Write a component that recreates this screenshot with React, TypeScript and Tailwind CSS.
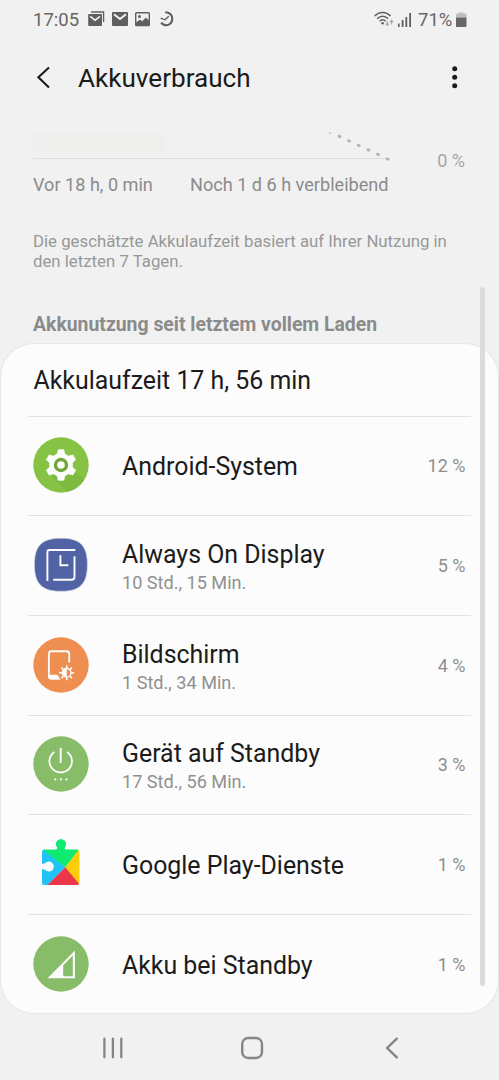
import type { ReactNode } from 'react'
import clsx from 'clsx'

interface UsageItem {
  name: string
  duration?: string
  percent: number
  icon: ReactNode
}

function MailStackIcon() {
  return (
    <svg className="w-[17px] h-[16px]" viewBox="0 0 17 16" fill="none">
      <path d="M3.2 1H15.6V11" stroke="#5f5f5f" strokeWidth="1.3" />
      <rect x="0.2" y="3" width="13.8" height="12" rx="1" fill="#5f5f5f" />
      <path d="M2.2 5.3L7.1 9.2L12 5.3" stroke="#f1f1f1" strokeWidth="1.7" />
    </svg>
  )
}

function MailIcon() {
  return (
    <svg className="w-[16px] h-[16px]" viewBox="0 0 16 16" fill="none">
      <rect y="1" width="16" height="14" rx="1" fill="#5f5f5f" />
      <path d="M2 3.2L8 8L14 3.2" stroke="#f1f1f1" strokeWidth="2" />
    </svg>
  )
}

function PictureIcon() {
  return (
    <svg className="w-[15px] h-[16px]" viewBox="0 0 15 16" fill="none">
      <rect x="0.7" y="1.7" width="13.6" height="12.8" rx="0.8" stroke="#5f5f5f" strokeWidth="1.4" />
      <circle cx="4.5" cy="5.4" r="1.5" fill="#5f5f5f" />
      <path d="M1 11.5L5 8.6L7.2 10.3L10.8 6.6L14 9.6V14.5H1Z" fill="#5f5f5f" />
    </svg>
  )
}

function ClockSwirlIcon() {
  return (
    <svg className="w-[14px] h-[16px]" viewBox="0 0 14 16" fill="none" stroke="#5f5f5f">
      <path d="M5.2 1.3C9.7 1.3 12.7 4.4 12.3 8.4C11.9 12.5 8.6 14.7 5.2 14.1C3.4 13.8 2 12.9 1.2 11.6" strokeWidth="2.1" />
      <path d="M0.6 7.2L5 8.8L8.8 5.2" strokeWidth="1.4" />
    </svg>
  )
}

function WifiIcon() {
  return (
    <svg className="w-[20px] h-[16px]" viewBox="0 0 20 16" fill="none">
      <g stroke="#5f5f5f" strokeWidth="1.5">
        <path d="M0.7 5.1C5 0.2 12.2 0.2 16.5 5.1" />
        <path d="M3.2 7.8C6.2 4.5 11 4.5 14 7.8" />
        <path d="M5.7 10.2C7.3 8.3 9.9 8.3 11.5 10.2" />
      </g>
      <circle cx="8.6" cy="12.3" r="1.3" fill="#5f5f5f" />
      <path d="M13.3 10V14.2M11.7 12.7L13.3 14.4L14.9 12.7M17.6 13.4V9.5M16 11L17.6 9.3L19.2 11" stroke="#a8a8a8" strokeWidth="1.1" />
    </svg>
  )
}

function SignalIcon() {
  return (
    <svg className="w-[14px] h-[16px]" viewBox="0 0 14 16" fill="#5f5f5f">
      <rect x="0" y="11.5" width="1.6" height="3.5" />
      <rect x="3.7" y="8" width="1.8" height="7" />
      <rect x="7.4" y="5" width="1.8" height="10" />
      <rect x="11.2" y="1" width="1.8" height="14" />
    </svg>
  )
}

function BatteryIcon() {
  return (
    <svg className="w-[11px] h-[16px]" viewBox="0 0 11 16">
      <path d="M3 0.5H7.5V1.5H9.6Q10.5 1.5 10.5 2.5V5.5H0V2.5Q0 1.5 1 1.5H3Z" fill="#bdbdbd" />
      <path d="M0 5.5H10.5V14.2Q10.5 15 9.7 15H0.8Q0 15 0 14.2Z" fill="#666666" />
    </svg>
  )
}

const gearTeeth = [0, 60, 120, 180, 240, 300]

function GearIcon() {
  return (
    <svg className="w-[56px] h-[56px]" viewBox="0 0 56 56">
      <circle cx="28" cy="28" r="27.7" fill="#86c345" />
      <path d="M17.5 38L34 55C41 53.5 47.5 49 51 43L39 31Z" fill="#7fba40" />
      <g fill="#fcfcfc">
        <circle cx="28" cy="28" r="11.8" />
        {gearTeeth.map(angle => (
          <path key={angle} d="M25.2 12.8H30.8L32 18.5H24Z" transform={`rotate(${angle} 28 28)`} strokeLinejoin="round" stroke="#fcfcfc" strokeWidth="0.8" />
        ))}
      </g>
      <circle cx="28" cy="28" r="5.5" fill="#fcfcfc" stroke="#6fa63a" strokeWidth="3.4" />
    </svg>
  )
}

function AlwaysOnIcon() {
  return (
    <svg className="w-[56px] h-[56px]" viewBox="0 0 56 56" fill="none">
      <path d="M28 1.2C47 1.2 54.4 8.6 54.4 27.7S47 54.3 28 54.3S1.4 46.8 1.4 27.7S9 1.2 28 1.2Z" fill="#5163a5" stroke="#d5d8e4" strokeWidth="0.7" />
      <g stroke="#fcfcfc" strokeWidth="1.9">
        <path d="M42.3 13H16.4Q14.4 13 14.4 15V44" />
        <path d="M20.3 42.8H38.5Q41.5 42.8 41.5 39.8V19.2" />
        <path d="M27.4 18.2V28.3H35.3" />
      </g>
    </svg>
  )
}

const sunRays = [0, 45, 90, 135, 180, 225, 270, 315]

function ScreenIcon() {
  return (
    <svg className="w-[56px] h-[56px]" viewBox="0 0 56 56" fill="none">
      <circle cx="28" cy="28" r="27.7" fill="#ee8f51" />
      <path d="M36.2 25.5V17Q36.2 14.3 33.5 14.3H18.6Q15.9 14.3 15.9 17V39.6Q15.9 41.6 18 41.6H26" stroke="#fcfcfc" strokeWidth="1.9" />
      <path d="M15.9 37.8H24.3L27.5 42.5H18Q15.9 42.5 15.9 40.4Z" fill="#fcfcfc" />
      <circle cx="33.7" cy="35.8" r="4.3" stroke="#fcfcfc" strokeWidth="1.4" />
      <path d="M33.7 31.5A4.3 4.3 0 0 0 33.7 40.1Z" fill="#fcfcfc" />
      {sunRays.map(angle => (
        <path key={angle} d="M33.7 28.3V31" stroke="#fcfcfc" strokeWidth="1.6" transform={`rotate(${angle} 33.7 35.8)`} />
      ))}
    </svg>
  )
}

function StandbyIcon() {
  return (
    <svg className="w-[56px] h-[56px]" viewBox="0 0 56 56" fill="none">
      <circle cx="28" cy="28" r="27.7" fill="#87bd68" />
      <path d="M21.3 15.9A11.3 11.3 0 1 0 34.1 15.9" stroke="#fcfcfc" strokeWidth="1.8" />
      <path d="M27.7 11.8V27" stroke="#fcfcfc" strokeWidth="1.9" />
      <g fill="#fcfcfc">
        <circle cx="22.3" cy="43.4" r="1.1" />
        <circle cx="27.9" cy="43.4" r="1.1" />
        <circle cx="33.4" cy="43.4" r="1.1" />
      </g>
    </svg>
  )
}

function PlayServicesIcon() {
  return (
    <svg className="w-[56px] h-[56px]" viewBox="0 0 56 56">
      <path d="M11.5 13.6L32.4 31.3L14.5 49H11Q9 49 9 47V33.6C10.5 33.2 11.3 33.2 12.2 34.1A5 5 0 1 0 12.2 27.1C11.3 28 10.5 28 9 27.6V15.6Q9 14.4 11.5 13.6Z" fill="#1fc4f4" />
      <path d="M11 13.4H23.3Q24.5 13.2 24 11.2A5 5 0 1 1 31.9 11.2Q31.3 13.2 32.6 13.4H44Q45.3 13.4 46 14.8L32.4 31.3L10 13.8Z" fill="#0eea72" />
      <path d="M45.4 14Q46.5 14.6 46.5 15.8V47Q46.5 48 45.8 48.5L32.2 31.3Z" fill="#fdcd0b" />
      <path d="M32.3 31.3L46 47.8Q45.5 49 44 49H14.5Z" fill="#ec374a" />
    </svg>
  )
}

function CellStandbyIcon() {
  return (
    <svg className="w-[56px] h-[56px]" viewBox="0 0 56 56" fill="none">
      <circle cx="28" cy="28" r="27.7" fill="#87bd68" />
      <path d="M14.6 42.2L41.9 14.6V42.2ZM30.2 40.2H39.8V19.6L30.2 29.2Z" fill="#fcfcfc" fillRule="evenodd" />
    </svg>
  )
}

const items: UsageItem[] = [
  { name: 'Android-System', percent: 12, icon: <GearIcon /> },
  { name: 'Always On Display', duration: '10 Std., 15 Min.', percent: 5, icon: <AlwaysOnIcon /> },
  { name: 'Bildschirm', duration: '1 Std., 34 Min.', percent: 4, icon: <ScreenIcon /> },
  { name: 'Gerät auf Standby', duration: '17 Std., 56 Min.', percent: 3, icon: <StandbyIcon /> },
  { name: 'Google Play-Dienste', percent: 1, icon: <PlayServicesIcon /> },
  { name: 'Akku bei Standby', percent: 1, icon: <CellStandbyIcon /> },
]

function StatusBar() {
  return (
    <div className="flex h-[40px] items-center justify-between pl-[33px] pr-[32px] text-[#666666]">
      <div className="flex items-center">
        <span className="w-[55px] pt-[2px] text-[18.5px]">17:05</span>
        <div className="flex items-center gap-[7px] pb-[2px]">
          <MailStackIcon />
          <MailIcon />
          <PictureIcon />
          <span className="ml-[3px]"><ClockSwirlIcon /></span>
        </div>
      </div>
      <div className="flex items-center">
        <span className="pb-[2px]"><WifiIcon /></span>
        <span className="ml-[4px] pb-px"><SignalIcon /></span>
        <span className="ml-[6px] w-[38px] whitespace-nowrap pt-[2px] text-[18.5px]">71%</span>
        <span className="pb-px"><BatteryIcon /></span>
      </div>
    </div>
  )
}

function Header() {
  return (
    <header className="flex h-[76px] items-center pl-[35px] pr-[38px] text-[#1b1b1b]">
      <svg className="h-[24px] w-[16px]" viewBox="0 0 16 24" fill="none">
        <path d="M14 1.5L3.4 11.3L14 21.5" stroke="currentColor" strokeWidth="2.1" />
      </svg>
      <h1 className="ml-[27px] flex-1 pt-[2px] text-[26.1px]">Akkuverbrauch</h1>
      <svg className="h-[24px] w-[12px]" viewBox="0 0 12 24" fill="currentColor">
        <circle cx="5.7" cy="2.7" r="2.5" />
        <circle cx="5.7" cy="11.2" r="2.5" />
        <circle cx="5.7" cy="19.7" r="2.5" />
      </svg>
    </header>
  )
}

const forecastDots = [
  [339.5, 20.3],
  [349, 24.9],
  [358.7, 29.4],
  [368.4, 33.9],
  [378, 38.4],
  [387.7, 43],
]

function Forecast() {
  return (
    <section className="h-[184px] text-[#8b8b8b]">
      <div className="flex h-[58px] pr-[34px]">
        <svg className="h-[58px] w-[400px]" viewBox="0 0 400 58">
          <rect x="33" y="16" width="133" height="20" fill="#efefed" />
          <rect x="33" y="42" width="357" height="1" fill="#dcdfdf" />
          <rect x="328.5" y="16.4" width="3" height="1.4" rx="0.7" fill="#b3bfc4" />
          {forecastDots.map(([x, y]) => (
            <ellipse key={x} cx={x} cy={y} rx="2" ry="1.5" fill="#a9b7be" transform={`rotate(25 ${x} ${y})`} />
          ))}
        </svg>
        <span className="flex-1 pt-[34px] text-right text-[18px] leading-[22px] text-[#a5a5a5]">0 %</span>
      </div>
      <div className="flex pl-[33px] text-[18.1px] leading-[22px]">
        <span className="w-[157px]">Vor 18 h, 0 min</span>
        <span>Noch 1 d 6 h verbleibend</span>
      </div>
      <p className="mt-[36px] w-[460px] pl-[33px] text-[16.8px] leading-[19.5px] text-[#989898]">
        Die geschätzte Akkulaufzeit basiert auf Ihrer Nutzung in
        <br />
        den letzten 7 Tagen.
      </p>
    </section>
  )
}

function UsageRow({ item }: { item: UsageItem }) {
  return (
    <li className="mx-[28px] flex h-[99.7px] items-center border-t-[1.5px] border-[#e2e2e2] pl-[5px] pr-[5.5px]">
      <div className="pb-px">{item.icon}</div>
      <div className={clsx('ml-[33px] flex-1', item.duration ? 'pt-[5px]' : 'pt-[3px]')}>
        <p className="text-[24.9px] leading-[30px] text-[#1b1b1b]">{item.name}</p>
        {item.duration && (
          <p className="text-[18.1px] leading-[26px] text-[#909090]">{item.duration}</p>
        )}
      </div>
      <span className="text-[18px] text-[#8e8e8e]">{item.percent} %</span>
    </li>
  )
}

function NavigationBar() {
  return (
    <nav className="flex h-[68px] items-center text-[#858585]">
      <svg className="ml-[101px] h-[24px] w-[24px]" viewBox="0 0 24 24" fill="none" stroke="currentColor" strokeWidth="2.3" strokeLinecap="round">
        <path d="M3.4 2.7V21.3M11.9 2.7V21.3M20.3 2.7V21.3" />
      </svg>
      <svg className="ml-[115px] h-[24px] w-[24px]" viewBox="0 0 24 24" fill="none" stroke="currentColor" strokeWidth="2.4">
        <rect x="2.2" y="2" width="19.8" height="20" rx="6" />
      </svg>
      <svg className="ml-[119px] h-[24px] w-[16px]" viewBox="0 0 16 24" fill="none" stroke="currentColor" strokeWidth="2.4" strokeLinecap="round">
        <path d="M13.8 2.7L4.2 12L13.8 21.3" />
      </svg>
    </nav>
  )
}

export default function App() {
  return (
    <div className="relative h-[1080px] w-[499px] overflow-hidden bg-[#f1f1f1] font-['Roboto',sans-serif]">
      <StatusBar />
      <Header />
      <Forecast />
      <h2 className="h-[43px] pl-[33px] pt-[13px] text-[19.4px] font-bold leading-[24px] text-[#8b8b8b]">
        Akkunutzung seit letztem vollem Laden
      </h2>
      <section className="h-[671px] overflow-hidden rounded-[34px] border border-[#e6e6e6] bg-[#fcfcfc]">
        <p className="h-[71.5px] pl-[32.5px] pt-[21px] text-[24.9px] leading-[32px] text-[#1b1b1b]">Akkulaufzeit 17 h, 56 min</p>
        <ul className="-mx-px">
          {items.map(item => (
            <UsageRow key={item.name} item={item} />
          ))}
        </ul>
      </section>
      <NavigationBar />
      <div className="absolute left-[480px] top-[287px] h-[699px] w-[5px] rounded-full bg-[#dcdcdc]" />
    </div>
  )
}
